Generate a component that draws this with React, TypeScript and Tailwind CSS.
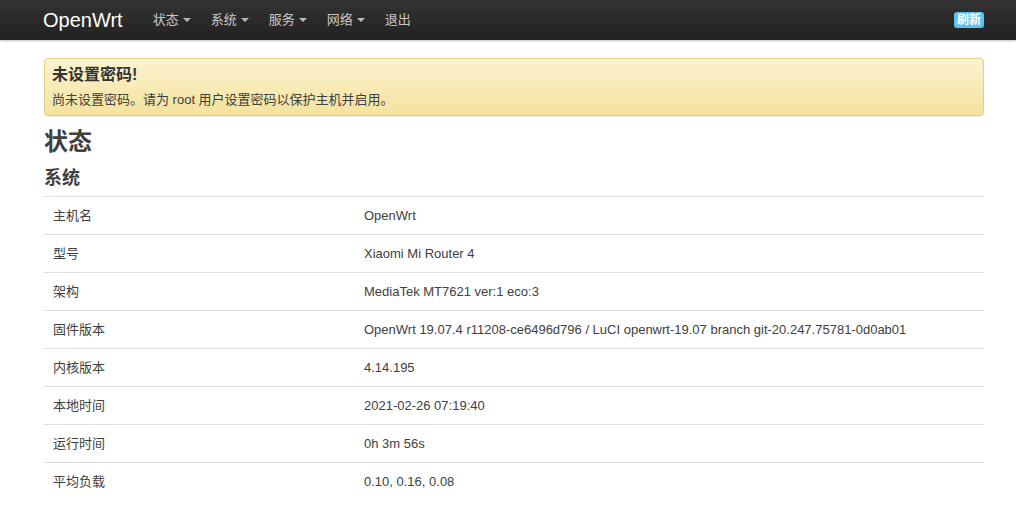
import React from "react";

const font = { fontFamily: '"Liberation Sans", Arial, "Noto Sans CJK SC", sans-serif' };

function Caret() {
  return <span className="ml-[4px] inline-block h-0 w-0 border-x-[4px] border-t-[4px] border-x-transparent border-t-[#bbbbbb] align-middle" />;
}

const rows: [string, string][] = [
  ["主机名", "OpenWrt"],
  ["型号", "Xiaomi Mi Router 4"],
  ["架构", "MediaTek MT7621 ver:1 eco:3"],
  ["固件版本", "OpenWrt 19.07.4 r11208-ce6496d796 / LuCI openwrt-19.07 branch git-20.247.75781-0d0ab01"],
  ["内核版本", "4.14.195"],
  ["本地时间", "2021-02-26 07:19:40"],
  ["运行时间", "0h 3m 56s"],
  ["平均负载", "0.10, 0.16, 0.08"],
];

export default function App() {
  return (
    <div className="min-h-[517px] w-[1016px] bg-white text-[#404040]" style={font}>
      <div className="h-[40px] bg-gradient-to-b from-[#333333] to-[#222222] shadow-[0_1px_2px_rgba(0,0,0,0.25)]">
        <div className="flex h-full w-[941px] items-center pl-[43px] box-content">
          <div className="mr-[20px] text-[20px] leading-[40px] text-white">OpenWrt</div>
          {["状态", "系统", "服务", "网络"].map((t) => (
            <div key={t} className="flex w-[58px] shrink-0 items-center pl-[10px] text-[13px] leading-[40px] text-[#c8c8c8]">
              {t}
              <Caret />
            </div>
          ))}
          <div className="px-[10px] text-[13px] leading-[40px] text-[#c8c8c8]">退出</div>
          <div className="ml-auto rounded-[3px] bg-[#5bc5ee] px-[3px] text-[12px] font-bold leading-[16px] text-white">刷新</div>
        </div>
      </div>
      <div className="w-[940px] pl-[44px] box-content">
        <div className="mt-[18px] h-[58px] rounded-[4px] border border-[#e3cf83] bg-gradient-to-b from-[#fbf3d0] to-[#f4e29d] px-[7px] pt-[6px] shadow-[0_1px_0_rgba(0,0,0,0.05)]">
          <div className="text-[16px] font-bold leading-[20px] text-[#333333]">未设置密码!</div>
          <div className="mt-[5px] text-[13px] leading-[20px] text-[#404040]">尚未设置密码。请为 root 用户设置密码以保护主机并启用。</div>
        </div>
        <h1 className="mt-[8px] text-[24px] font-bold leading-[36px] text-[#404040]">状态</h1>
        <h2 className="mt-[6px] text-[18px] font-bold leading-[24px] text-[#404040]">系统</h2>
        <div className="mt-[6px]">
          {rows.map(([k, v]) => (
            <div key={k} className="flex h-[38px] items-center border-t border-[#dddddd] text-[13px]">
              <div className="w-[312px] pl-[9px]">{k}</div>
              <div className="pl-[8px]">{v}</div>
            </div>
          ))}
        </div>
      </div>
    </div>
  );
}
